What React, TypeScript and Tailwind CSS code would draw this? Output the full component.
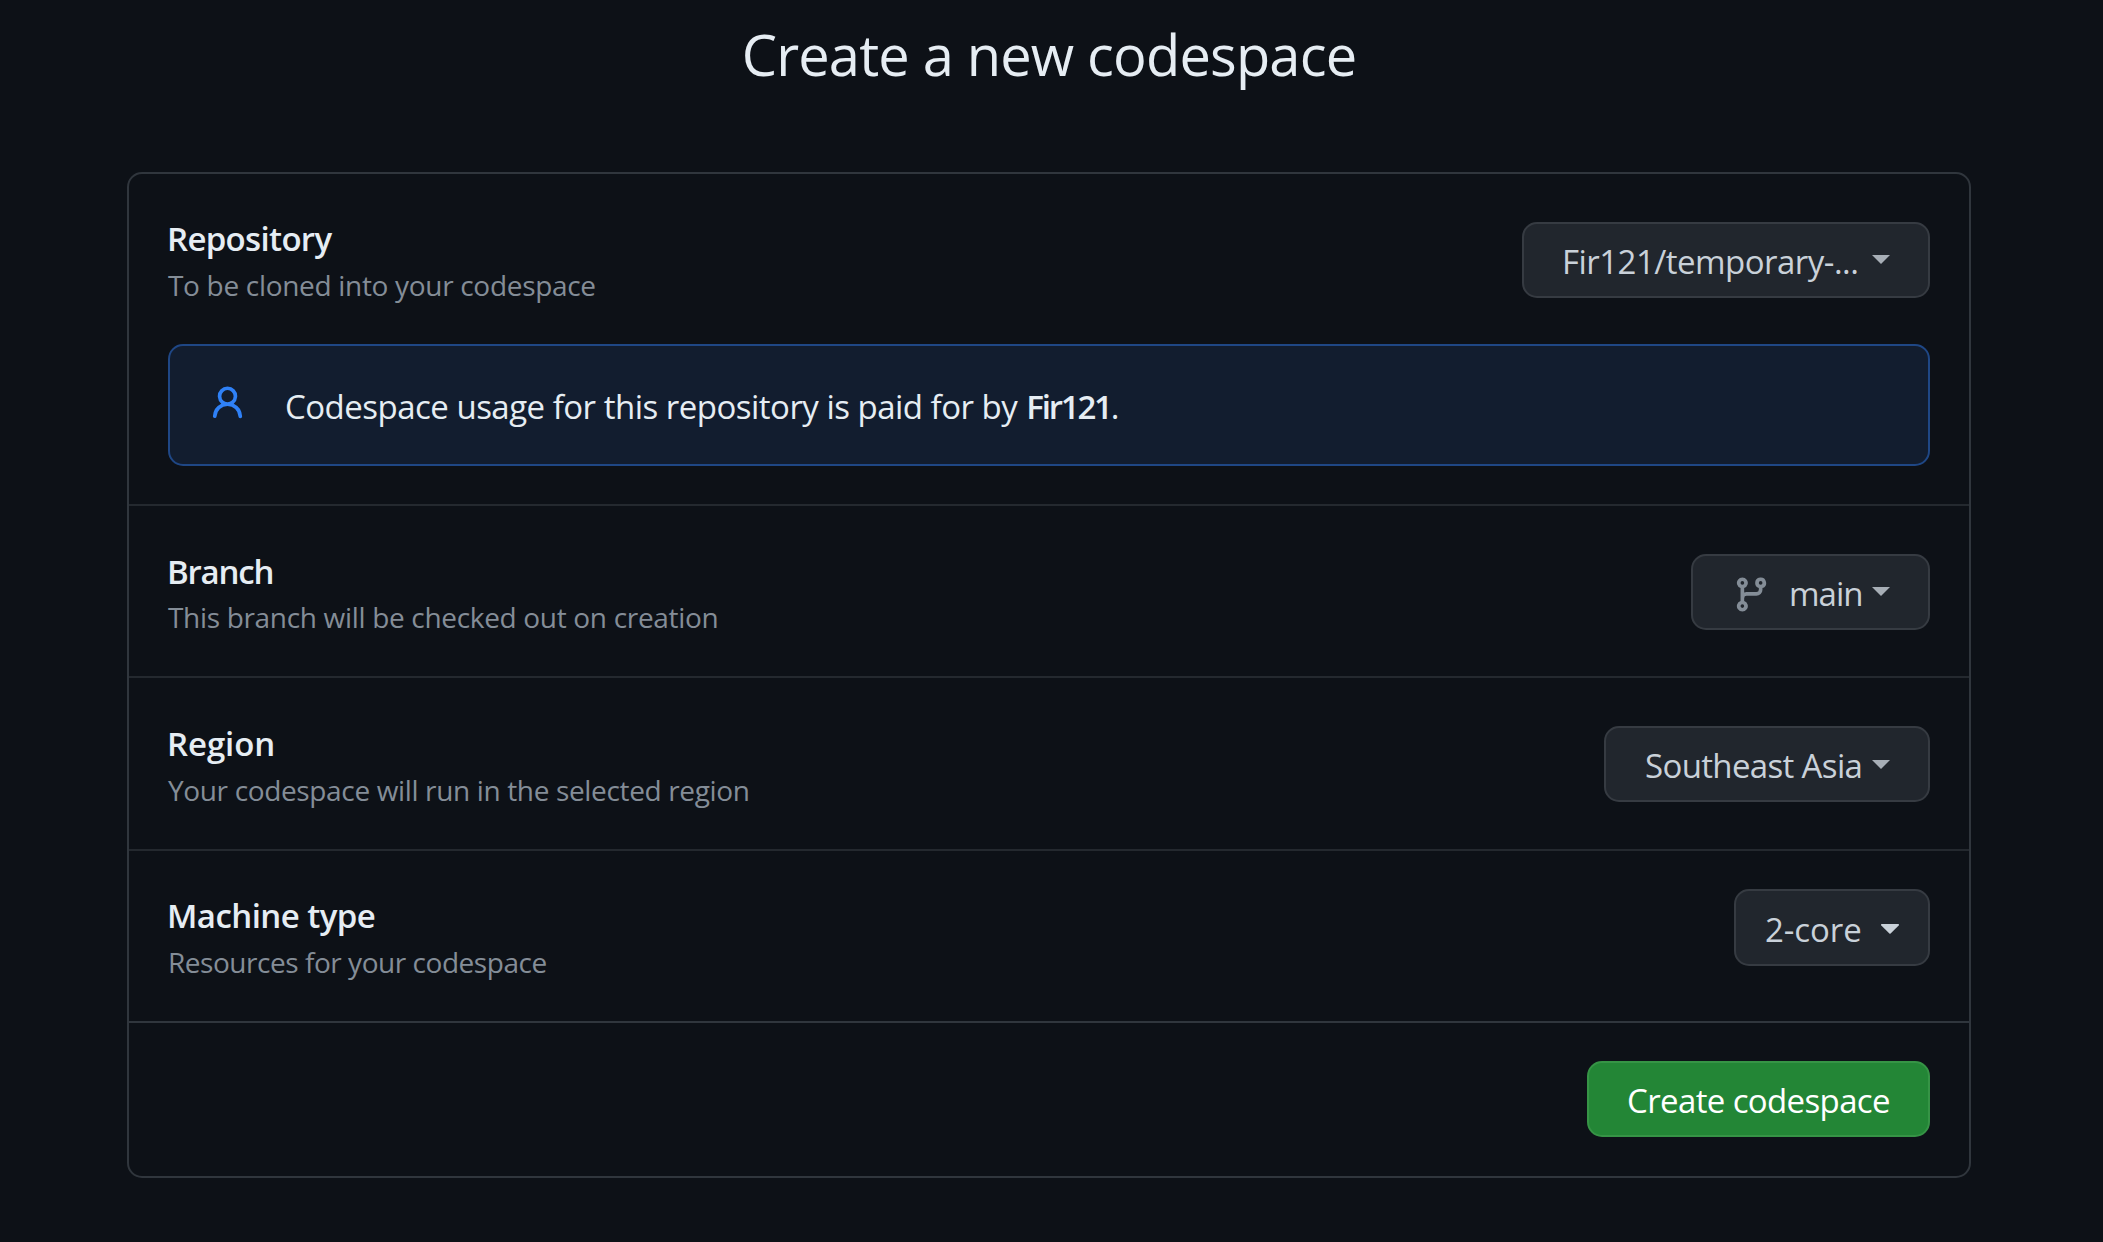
import type { ReactNode } from "react";

function Caret({ className = "" }: { className?: string }) {
  return (
    <span
      className={`h-0 w-0 shrink-0 self-start border-x-[9px] border-t-[9px] border-x-transparent border-t-[#a7aeb6] ${className}`}
    />
  );
}

function BranchIcon() {
  return (
    <svg viewBox="0 0 16 16" className="mt-[5px] h-[39px] w-[39px] shrink-0 fill-[#848d97]">
      <path d="M9.5 3.25a2.25 2.25 0 1 1 3 2.122V6A2.5 2.5 0 0 1 10 8.5H6a1 1 0 0 0-1 1v1.128a2.251 2.251 0 1 1-1.5 0V5.372a2.25 2.25 0 1 1 1.5 0v1.836A2.493 2.493 0 0 1 6 7h4a1 1 0 0 0 1-1v-.628A2.25 2.25 0 0 1 9.5 3.25Zm-6 0a.75.75 0 1 0 1.5 0 .75.75 0 0 0-1.5 0Zm8.25-.75a.75.75 0 1 0 0 1.5.75.75 0 0 0 0-1.5ZM4.25 12a.75.75 0 1 0 0 1.5.75.75 0 0 0 0-1.5Z" />
    </svg>
  );
}

function PersonIcon() {
  return (
    <svg viewBox="0 0 16 16" className="mt-[37.5px] h-[39px] w-[39px] shrink-0 self-start fill-[#2f81f7]">
      <path d="M10.561 8.073a6.005 6.005 0 0 1 3.432 5.142.75.75 0 1 1-1.498.07 4.5 4.5 0 0 0-8.99 0 .75.75 0 0 1-1.498-.07 6.004 6.004 0 0 1 3.431-5.142 3.999 3.999 0 1 1 5.123 0ZM10.5 5a2.5 2.5 0 1 0-5 0 2.5 2.5 0 0 0 5 0Z" />
    </svg>
  );
}

function SelectButton({ className, children }: { className: string; children: ReactNode }) {
  return (
    <button
      className={`flex shrink-0 items-center rounded-[15px] border-2 border-[#363b42] bg-[#21262d] text-[33px] leading-[48px] whitespace-nowrap text-[#c9d1d9] ${className}`}
    >
      {children}
    </button>
  );
}

function Label({
  title,
  note,
  titleClass,
  noteClass,
}: {
  title: string;
  note: string;
  titleClass: string;
  noteClass: string;
}) {
  return (
    <div className="whitespace-nowrap">
      <h2 className={`-ml-px text-[33px] font-semibold text-[#e6edf3] ${titleClass}`}>{title}</h2>
      <p className={`text-[28px] leading-[46px] text-[#848d97] ${noteClass}`}>{note}</p>
    </div>
  );
}

export default function App() {
  return (
    <div className="h-[1242px] w-full bg-[#0d1117] pt-[18px] pr-[132px] pl-[127px] font-['Open_Sans','Noto_Sans',sans-serif] text-[#e6edf3]">
      <h1 className="text-center text-[56px] leading-[72px] tracking-[-0.82px]">Create a new codespace</h1>

      <main className="mt-[82px] h-[1006px] rounded-[15px] border-2 border-[#30363d]">
        <section className="h-[332px] border-b-2 border-[#24292f] px-[39px]">
          <div className="flex h-[170px] justify-between">
            <div className="pt-[40px]">
              <Label
                title="Repository"
                note="To be cloned into your codespace"
                titleClass="pt-px leading-[48px] tracking-[-0.67px]"
                noteClass="tracking-[-0.31px] -mt-px"
              />
            </div>
            <SelectButton className="mt-[48px] h-[76px] w-[408px] pr-[38px] pl-[38px]">
              <span className="pt-[4px] tracking-[-0.53px]">Fir121/temporary-...</span>
              <Caret className="mt-[31px] ml-auto" />
            </SelectButton>
          </div>
          <div className="flex h-[122px] items-center gap-[38px] rounded-[15px] border-2 border-[#1f4785] bg-[#121d2f] pl-[38px]">
            <PersonIcon />
            <p className="pt-[4px] text-[33px] leading-[48px] tracking-[-0.51px] whitespace-nowrap">
              Codespace usage for this repository is paid for by{" "}
              <strong className="ml-px font-semibold tracking-[-2.2px]">Fir121</strong>
              <span>.</span>
            </p>
          </div>
        </section>

        <section className="flex h-[172px] justify-between border-b-2 border-[#24292f] px-[39px]">
          <div className="pt-[41px]">
            <Label
              title="Branch"
              note="This branch will be checked out on creation"
              titleClass="pt-px leading-[48px] tracking-[-1.2px]"
              noteClass="tracking-[-0.32px] -mt-[2px]"
            />
          </div>
          <SelectButton className="mt-[48px] h-[76px] w-[239px] pr-[38px] pl-[39px]">
            <BranchIcon />
            <span className="ml-[18px] pt-[4px] tracking-[-1px]">main</span>
            <Caret className="mt-[31px] ml-auto" />
          </SelectButton>
        </section>

        <section className="flex h-[173px] justify-between border-b-2 border-[#24292f] px-[39px]">
          <div className="pt-[41px]">
            <Label
              title="Region"
              note="Your codespace will run in the selected region"
              titleClass="pt-px leading-[48px] tracking-[-0.1px]"
              noteClass="tracking-[-0.35px] -mt-px"
            />
          </div>
          <SelectButton className="mt-[48px] h-[76px] w-[326px] pr-[38px] pl-[39px]">
            <span className="pt-[4px] tracking-[-0.65px]">Southeast Asia</span>
            <Caret className="mt-[32px] ml-auto" />
          </SelectButton>
        </section>

        <section className="flex h-[172px] justify-between border-b-2 border-[#30363d] px-[39px]">
          <div className="pt-[41px]">
            <Label
              title="Machine type"
              note="Resources for your codespace"
              titleClass="leading-[48px] tracking-[-0.55px]"
              noteClass="tracking-[-0.46px] -mt-px"
            />
          </div>
          <SelectButton className="mt-[38px] h-[77px] w-[196px] pr-[29px] pl-[29px]">
            <span className="pt-[4px] tracking-[-0.08px]">2-core</span>
            <svg viewBox="0 0 18 10" className="mt-[33px] ml-auto h-[10px] w-[18px] self-start fill-[#c9d1d9]">
              <path d="M1 0h16c.9 0 1.300 1 .7 1.600L9.600 9.600a.9.900 0 0 1-1.200 0L.3 1.600C-.3 1 .1 0 1 0Z" />
            </svg>
          </SelectButton>
        </section>

        <footer className="flex justify-end px-[39px] pt-[38px]">
          <button className="flex h-[76px] w-[343px] items-center justify-center rounded-[15px] border-2 border-[#369446] bg-[#238636] text-[33px] leading-[48px] text-white">
            <span className="pt-[4px] tracking-[-0.63px] whitespace-nowrap">Create codespace</span>
          </button>
        </footer>
      </main>
    </div>
  );
}
